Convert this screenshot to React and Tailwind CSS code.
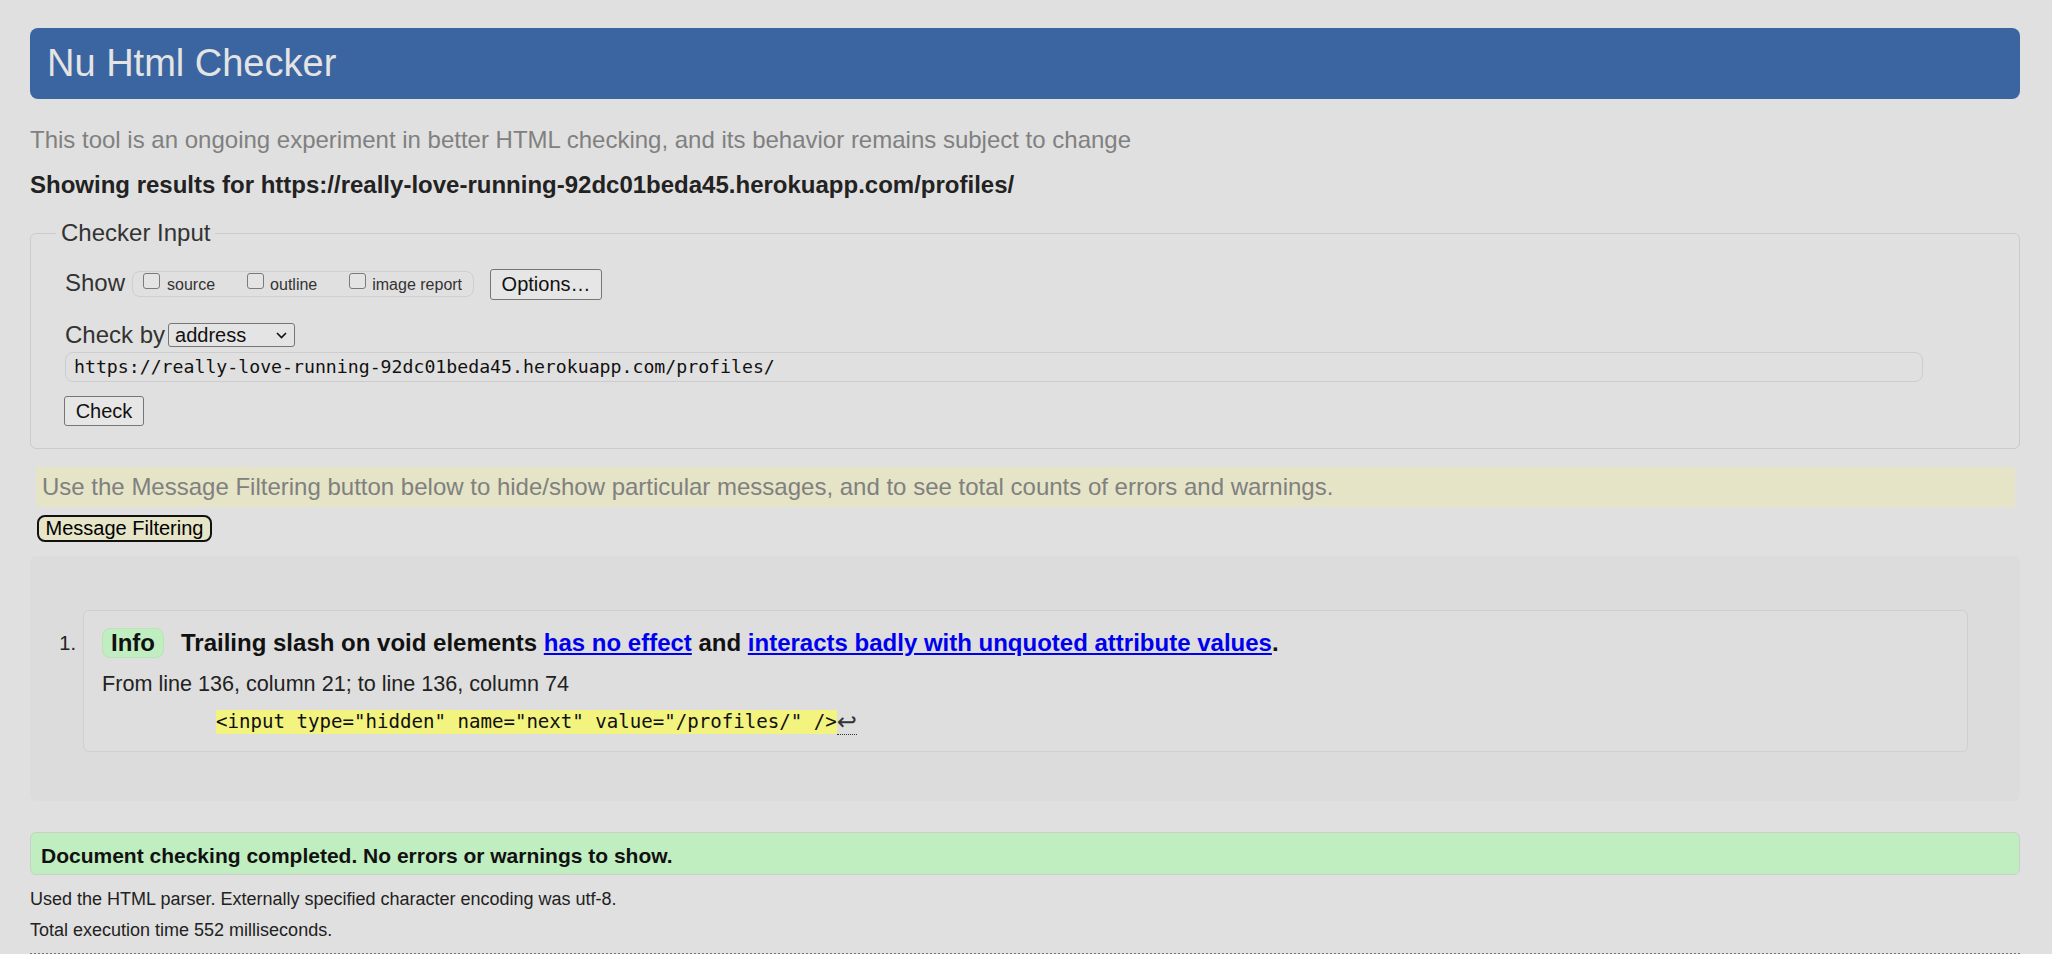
import React from "react";

const sans = { fontFamily: '"Liberation Sans", Arial, sans-serif' };

function Checkbox() {
  return (
    <span className="block w-[17px] h-[16px] border border-[#7a7a7a] rounded-[3px] bg-[#e4e4e4] mt-[1px] shrink-0" />
  );
}

export default function App() {
  return (
    <div
      className="min-h-[954px] bg-[#e0e0e0] pl-[30px] pr-[32px] pt-[28px] text-[#222]"
      style={sans}
    >
      <div className="h-[71px] leading-[71px] rounded-[8px] bg-[#3b65a0] pl-[17px] text-[38px] text-[#e4e4e4]">
        Nu Html Checker
      </div>

      <div className="mt-[27px] h-[28px] leading-[28px] text-[24px] text-[#808080] whitespace-nowrap">
        This tool is an ongoing experiment in better HTML checking, and its behavior remains subject to change
      </div>

      <div className="mt-[17px] h-[28px] leading-[28px] text-[24px] font-bold text-[#222] whitespace-nowrap">
        Showing results for https://really-love-running-92dc01beda45.herokuapp.com/profiles/
      </div>

      <fieldset className="mt-[20px] border border-[#cbcbcb] rounded-[6px] pb-[22px]">
        <legend className="ml-[25px] px-[5px] text-[24px] leading-[28px] text-[#333]">
          Checker Input
        </legend>

        <div className="pl-[34px]">
          <div className="flex items-start h-[31px] mt-[22px]">
            <span className="text-[24px] leading-[28px] text-[#333]">Show</span>
            <div className="ml-[7px] mt-[2px] h-[26px] w-[342px] border border-[#cfcfcf] rounded-[8px] flex items-start pl-[10px]">
              <Checkbox />
              <span className="ml-[7px] text-[16px] leading-[26px] text-[#333]">source</span>
              <span className="ml-[32px]">
                <Checkbox />
              </span>
              <span className="ml-[6px] text-[16px] leading-[26px] text-[#333]">outline</span>
              <span className="ml-[32px]">
                <Checkbox />
              </span>
              <span className="ml-[6px] text-[16px] leading-[26px] text-[#333] whitespace-nowrap">image report</span>
            </div>
            <button className="ml-[16px] h-[31px] w-[112px] border border-[#767676] rounded-[3px] bg-[#e6e6e6] text-[20px] leading-[29px] text-[#111]">
              Options…
            </button>
          </div>

          <div className="flex items-start h-[28px] mt-[21px]">
            <span className="text-[24px] leading-[28px] text-[#333] whitespace-nowrap">Check by</span>
            <div className="ml-[3px] mt-[2px] h-[24px] w-[127px] border border-[#767676] rounded-[3px] bg-[#e4e4e4] flex items-center pl-[6px] pr-[7px] justify-between">
              <span className="text-[20px] leading-[22px] text-[#111]">address</span>
              <svg width="11" height="7" viewBox="0 0 11 7" className="mt-[1px]">
                <path d="M1 1 L5.5 5.5 L10 1" fill="none" stroke="#111" strokeWidth="1.6" />
              </svg>
            </div>
          </div>

          <div
            className="mt-[3px] h-[30px] w-[1858px] border border-[#cdcdcd] rounded-[8px] pl-[8px] text-[18.2px] leading-[28px] text-[#111] whitespace-nowrap"
            style={{ fontFamily: '"DejaVu Sans Mono", monospace' }}
          >
            https://really-love-running-92dc01beda45.herokuapp.com/profiles/
          </div>

          <button className="mt-[14px] -ml-[1px] block h-[30px] w-[80px] border border-[#767676] rounded-[3px] bg-[#e6e6e6] text-[20px] leading-[28px] text-[#111]">
            Check
          </button>
        </div>
      </fieldset>

      <div className="mt-[18px] ml-[6px] mr-[5px] h-[40px] leading-[40px] bg-[#e5e4c6] pl-[6px] text-[24px] text-[#808080] whitespace-nowrap">
        Use the Message Filtering button below to hide/show particular messages, and to see total counts of errors and warnings.
      </div>

      <button className="mt-[8px] ml-[7px] block h-[27px] w-[175px] border-2 border-[#111] rounded-[8px] bg-[#e6e5c8] text-[20px] leading-[23px] text-[#000]">
        Message Filtering
      </button>

      <div className="mt-[14px] h-[245px] rounded-[6px] bg-[#dcdcdc] pt-[54px] pr-[52px] flex items-start">
        <div className="w-[53px] shrink-0 pt-[18px] pr-[7px] text-right text-[20px] leading-[30px] text-[#222]">
          1.
        </div>
        <div className="flex-1 h-[142px] border border-[#d0d0d0] rounded-[6px] bg-[#dedede] pt-[17px] pl-[18px]">
          <div className="flex items-start h-[30px]">
            <span className="h-[30px] w-[62px] rounded-[8px] bg-[#c0eec0] border border-[#b8e4b8] text-center text-[24px] font-bold leading-[28px] text-[#111]">
              Info
            </span>
            <span className="ml-[17px] text-[24px] font-bold leading-[30px] text-[#111] whitespace-nowrap">
              Trailing slash on void elements{" "}
              <span className="text-[#0000ee] underline">has no effect</span> and{" "}
              <span className="text-[#0000ee] underline">interacts badly with unquoted attribute values</span>.
            </span>
          </div>
          <div className="mt-[13px] h-[26px] text-[21.6px] leading-[26px] text-[#222] whitespace-nowrap">
            From line 136, column 21; to line 136, column 74
          </div>
          <div className="mt-[13px] h-[24px] pl-[114px] flex items-start">
            <span
              className="bg-[#f3f380] text-[19.1px] leading-[24px] text-[#111] whitespace-pre"
              style={{ fontFamily: '"DejaVu Sans Mono", monospace' }}
            >
              {'<input type="hidden" name="next" value="/profiles/" />'}
            </span>
            <span
              className="border-b border-dotted border-[#333] text-[24px] leading-[24px] text-[#333]"
              style={{ fontFamily: '"DejaVu Sans", sans-serif' }}
            >
              ↩
            </span>
          </div>
        </div>
      </div>

      <div className="mt-[31px] h-[43px] border border-[#c8d0c8] rounded-[6px] bg-[#c0eec0] pl-[10px] pt-[8px] text-[21px] font-bold leading-[29px] text-[#111] whitespace-nowrap">
        Document checking completed. No errors or warnings to show.
      </div>

      <div className="mt-[12px] h-[24px] text-[18px] leading-[24px] text-[#222]">
        Used the HTML parser. Externally specified character encoding was utf-8.
      </div>
      <div className="mt-[7px] h-[24px] text-[18px] leading-[24px] text-[#222]">
        Total execution time 552 milliseconds.
      </div>
      <div className="mt-[11px] border-t-2 border-dotted border-[#777]" />
    </div>
  );
}
